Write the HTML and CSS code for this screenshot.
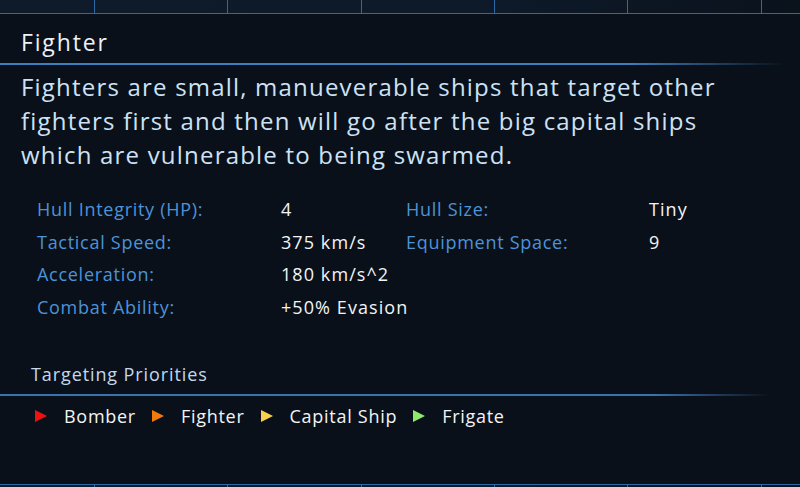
FILE: index.html
```html
<!DOCTYPE html>
<html>
<head>
<meta charset="utf-8">
<link rel="stylesheet" href="styles.css">
</head>
<body>
<div class="screen">
  <div class="topbar">
    <div class="cell c0"></div><div class="cell"></div><div class="cell"></div><div class="cell"></div><div class="cell"></div><div class="cell"></div><div class="cell last"></div>
  </div>
  <h1 class="title">Fighter</h1>
  <div class="rule rule-title"></div>
  <p class="desc">Fighters are small, manueverable ships that target other fighters first and then will go after the big capital ships which are vulnerable to being swarmed.</p>
  <div class="stats">
    <div class="label">Hull Integrity (HP):</div><div class="value">4</div><div class="label">Hull Size:</div><div class="value">Tiny</div>
    <div class="label">Tactical Speed:</div><div class="value">375 km/s</div><div class="label">Equipment Space:</div><div class="value">9</div>
    <div class="label">Acceleration:</div><div class="value">180 km/s^2</div><div></div><div></div>
    <div class="label">Combat Ability:</div><div class="value">+50% Evasion</div><div></div><div></div>
  </div>
  <h2 class="subhead">Targeting Priorities</h2>
  <div class="rule rule-sub"></div>
  <div class="priorities">
    <span class="tri red"></span><span class="pname">Bomber</span>
    <span class="tri orange"></span><span class="pname">Fighter</span>
    <span class="tri yellow"></span><span class="pname">Capital Ship</span>
    <span class="tri green"></span><span class="pname">Frigate</span>
  </div>
  <div class="spacer"></div>
  <div class="bottombar">
    <div class="cell c0"></div><div class="cell"></div><div class="cell"></div><div class="cell"></div><div class="cell"></div><div class="cell"></div><div class="cell last"></div>
  </div>
</div>
</body>
</html>
```
FILE: styles.css
```css
html, body {
  margin: 0;
  padding: 0;
  background: #0a1019;
}
.screen {
  width: 800px;
  height: 487px;
  overflow: hidden;
  display: flex;
  flex-direction: column;
  background: #0a1019;
  font-family: "Open Sans", "Noto Sans", sans-serif;
  letter-spacing: 0.03em;
}
.topbar, .bottombar {
  display: flex;
  flex: none;
  background: linear-gradient(90deg, #0f1b2b, #0e1a2a 60%, #0a121c);
}
.topbar {
  height: 13px;
  border-bottom: 1px solid #2b6aa6;
}
.bottombar {
  height: 2px;
  border-top: 1px solid #2b6aa6;
}
.cell {
  flex: none;
  width: 132.33px;
  border-right: 1px solid #2b6aa6;
}
.cell.c0 { width: 94px; }
.cell.last { border-right: none; }
.title {
  margin: 13px 0 0 21px;
  font-size: 23px;
  font-weight: 500;
  line-height: 30px;
  letter-spacing: 0.08em;
  color: #eef2f6;
}
.rule {
  height: 2px;
  flex: none;
}
.rule-title {
  margin-top: 6px;
  width: 785px;
  background: linear-gradient(90deg, #3c7fc0 0%, #3c7fc0 80%, rgba(60,127,192,0) 100%);
}
.desc {
  margin: 5px 0 0 21px;
  width: 725px;
  font-size: 24px;
  font-weight: 500;
  line-height: 34px;
  letter-spacing: 0.05em;
  color: #cde2f6;
}
.stats {
  margin: 21px 0 0 37px;
  display: grid;
  grid-template-columns: 244px 125px 243px 100px;
  grid-auto-rows: 32.5px;
  font-size: 18px;
  font-weight: 500;
  line-height: 32.5px;
  white-space: nowrap;
}
.label { color: #4d93d8; letter-spacing: 0.04em; }
.value { color: #f2f4f6; letter-spacing: 0.06em; }
.subhead {
  margin: 40px 0 0 31px;
  font-size: 18px;
  font-weight: 500;
  line-height: 22px;
  letter-spacing: 0.05em;
  color: #c2d8ee;
}
.rule-sub {
  margin-top: 9px;
  width: 770px;
  background: linear-gradient(90deg, #3a72ad 0%, #3a72ad 85%, rgba(58,114,173,0) 100%);
}
.priorities {
  margin: 9px 0 0 35px;
  display: flex;
  align-items: center;
  height: 22px;
  font-size: 18px;
  font-weight: 500;
  letter-spacing: 0.04em;
  color: #f2f4f6;
  white-space: nowrap;
}
.tri {
  flex: none;
  width: 0;
  height: 0;
  border-top: 6px solid transparent;
  border-bottom: 6px solid transparent;
  border-left: 12px solid;
  margin-right: 17px;
}
.pname { margin-right: 16px; }
.red { border-left-color: #ee1111; }
.orange { border-left-color: #f27a0c; }
.yellow { border-left-color: #f8cf4a; }
.green { border-left-color: #8ee86a; }
.spacer { flex: 1; }
```
